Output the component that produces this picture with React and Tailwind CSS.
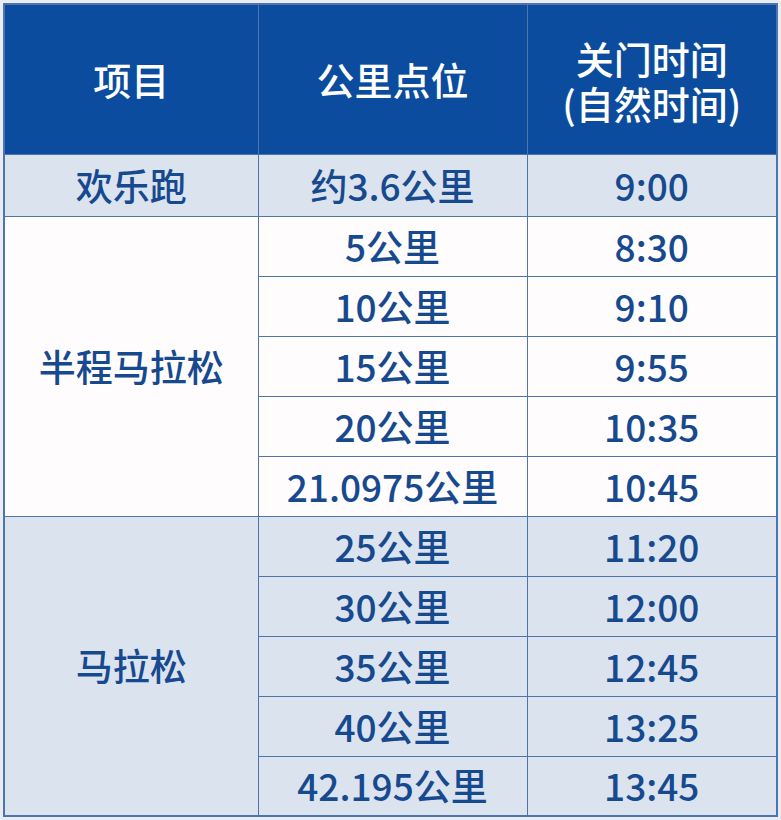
import React from "react"

const half = [
  ["5公里", "8:30"],
  ["10公里", "9:10"],
  ["15公里", "9:55"],
  ["20公里", "10:35"],
  ["21.0975公里", "10:45"],
]

const full = [
  ["25公里", "11:20"],
  ["30公里", "12:00"],
  ["35公里", "12:45"],
  ["40公里", "13:25"],
  ["42.195公里", "13:45"],
]

const cell = "border-[1.5px] border-[#4d74ab] text-center align-middle"

export default function App() {
  return (
    <div
      className="w-[781px] h-[820px] bg-[#e9edf3] p-[3px]"
      style={{ fontFamily: '"Noto Sans CJK SC", "Noto Sans", sans-serif' }}
    >
      <table className="w-[775px] border-collapse border-2 border-[#4d74ab] text-[37px] font-medium text-[#17498f] leading-none">
        <colgroup>
          <col className="w-[254px]" />
          <col className="w-[269px]" />
          <col />
        </colgroup>
        <thead>
          <tr className="h-[150px] bg-[#0b4c9e] text-white text-[38px]">
            <th className={cell + " font-medium"}>项目</th>
            <th className={cell + " font-medium"}>公里点位</th>
            <th className={cell + " font-medium leading-[45px] pt-[2px]"}>
              关门时间
              <br />
              (自然时间)
            </th>
          </tr>
        </thead>
        <tbody>
          <tr className="h-[62px] bg-[#dbe3ef]">
            <td className={cell}>欢乐跑</td>
            <td className={cell}>约3.6公里</td>
            <td className={cell}>9:00</td>
          </tr>
          {half.map(([km, t], i) => (
            <tr key={km} className="h-[60px] bg-[#fefcfc]">
              {i === 0 && (
                <td rowSpan={5} className={cell}>
                  半程马拉松
                </td>
              )}
              <td className={cell}>{km}</td>
              <td className={cell}>{t}</td>
            </tr>
          ))}
          {full.map(([km, t], i) => (
            <tr key={km} className="h-[60px] bg-[#dbe3ef]">
              {i === 0 && (
                <td rowSpan={5} className={cell}>
                  马拉松
                </td>
              )}
              <td className={cell}>{km}</td>
              <td className={cell}>{t}</td>
            </tr>
          ))}
        </tbody>
      </table>
    </div>
  )
}
